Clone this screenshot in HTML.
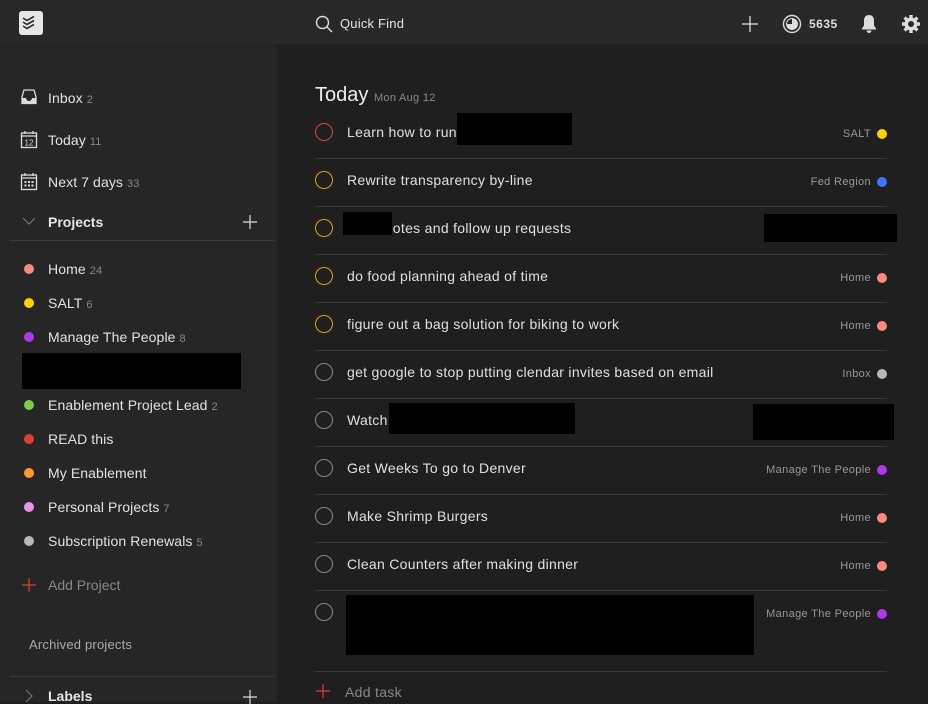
<!DOCTYPE html>
<html><head><meta charset="utf-8"><style>
*{margin:0;padding:0;box-sizing:border-box}
body{width:928px;height:702px;overflow:hidden;background:#1f1f1f;font-family:"Liberation Sans",sans-serif;color:#ddd;position:relative}
.a{position:absolute;white-space:nowrap}
#hdr{left:0;top:0;width:928px;height:45px;background:#282828;border-bottom:1px solid #222}
#side{left:0;top:45px;width:277px;height:657px;background:#262626}
.nav{font-size:14px;color:#e2e2e2;letter-spacing:.1px}
.cnt{font-size:11px;color:#888;margin-left:4px}
.dot{position:absolute;width:10px;height:10px;border-radius:50%}
.hr{position:absolute;height:1px;background:#3a3a3a}
.task{font-size:14px;color:#e0e0e0;letter-spacing:.3px}
.circ{position:absolute;width:18px;height:18px;border-radius:50%;border:1.5px solid #888}
.lab{font-size:11px;color:#999;text-align:right;letter-spacing:.35px}
.ld{position:absolute;width:10px;height:10px;border-radius:50%}
.blk{position:absolute;background:#000}
</style></head><body>
<div class="a" id="hdr"></div>
<div class="a" style="left:19px;top:11px;width:24px;height:24px;background:#e6e6e6;border-radius:3px"></div>
<svg class="a" style="left:19px;top:11px" width="24" height="24" viewBox="0 0 24 24"><g fill="none" stroke="#282828" stroke-width="1.6"><path d="M4 7l4 2.5L15 5.5"/><path d="M4 11l4 2.5L15 9.5"/><path d="M4 15l4 2.5L15 13.5"/></g></svg>
<svg class="a" style="left:315px;top:15px" width="18" height="18" viewBox="0 0 18 18"><circle cx="7.5" cy="7.5" r="6" fill="none" stroke="#ddd" stroke-width="1.4"/><path d="M12 12l5 5" stroke="#ddd" stroke-width="1.4"/></svg>
<div class="a" style="left:340px;top:16px;font-size:13px;color:#e6e6e6;letter-spacing:.2px">Quick Find</div>
<svg class="a" style="left:741px;top:15px" width="18" height="18"><path d="M9 1v16M1 9h16" stroke="#ddd" stroke-width="1.3"/></svg>
<svg class="a" style="left:782px;top:14px" width="20" height="20" viewBox="0 0 20 20"><circle cx="10" cy="10" r="8.5" fill="none" stroke="#ddd" stroke-width="1.4"/><path d="M10 4.5A5.5 5.5 0 1 1 4.5 10L10 10Z" fill="#ddd"/><circle cx="10" cy="10" r="5.5" fill="none" stroke="#ddd" stroke-width="1"/></svg>
<div class="a" style="left:809px;top:17px;font-size:12px;font-weight:bold;color:#ddd;letter-spacing:.5px">5635</div>
<svg class="a" style="left:860px;top:14px" width="18" height="20" viewBox="0 0 18 20"><path d="M9 1c-3.5 0-5 2.5-5 5.5v5L2 14.5v1h14v-1l-2-3v-5C14 3.5 12.5 1 9 1z" fill="#ddd"/><path d="M6.5 16.5a2.5 2.5 0 0 0 5 0z" fill="#ddd"/></svg>
<svg class="a" style="left:901px;top:14px" width="20" height="20" viewBox="0 0 20 20"><g fill="#ddd"><circle cx="10" cy="10" r="6.5"/><g stroke="#ddd" stroke-width="3.4"><path d="M10 1v18M1 10h18M3.6 3.6l12.8 12.8M16.4 3.6L3.6 16.4"/></g></g><circle cx="10" cy="10" r="3" fill="#282828"/></svg>

<div class="a" id="side"></div>
<svg class="a" style="left:20px;top:88px" width="18" height="18" viewBox="0 0 18 18"><path d="M2 9L4 2h10l2 7v6.5H2z" fill="none" stroke="#ddd" stroke-width="1.3"/><path d="M2 10h4a3 3 0 0 0 6 0h4v5.5H2z" fill="#ddd"/></svg>
<div class="a nav" style="left:48px;top:90px">Inbox<span class="cnt">2</span></div>
<svg class="a" style="left:20px;top:130px" width="18" height="19" viewBox="0 0 18 19"><rect x="1.5" y="3" width="15" height="14.5" fill="none" stroke="#ddd" stroke-width="1.3"/><path d="M1.5 6h15M5 1v3M13 1v3" stroke="#ddd" stroke-width="1.3"/><text x="9" y="15.5" font-size="8" fill="#ddd" text-anchor="middle" font-family="Liberation Sans">12</text></svg>
<div class="a nav" style="left:48px;top:132px">Today<span class="cnt">11</span></div>
<svg class="a" style="left:20px;top:172px" width="18" height="19" viewBox="0 0 18 19"><rect x="1.5" y="3" width="15" height="14.5" fill="none" stroke="#ddd" stroke-width="1.3"/><path d="M1.5 6h15M5 1v3M13 1v3" stroke="#ddd" stroke-width="1.3"/><g fill="#ddd"><rect x="4.5" y="9" width="2" height="2"/><rect x="8" y="9" width="2" height="2"/><rect x="11.5" y="9" width="2" height="2"/><rect x="4.5" y="12.5" width="2" height="2"/><rect x="8" y="12.5" width="2" height="2"/><rect x="11.5" y="12.5" width="2" height="2"/></g></svg>
<div class="a nav" style="left:48px;top:174px">Next 7 days<span class="cnt">33</span></div>
<svg class="a" style="left:22px;top:217px" width="14" height="9"><path d="M1 1l6 6 6-6" fill="none" stroke="#777" stroke-width="1.2"/></svg>
<div class="a" style="left:48px;top:214px;font-size:14px;font-weight:bold;color:#e6e6e6">Projects</div>
<svg class="a" style="left:243px;top:215px" width="14" height="14"><path d="M7 0v14M0 7h14" stroke="#ddd" stroke-width="1.2"/></svg>
<div class="hr" style="left:10px;top:240px;width:265px"></div>

<div class="dot" style="left:24px;top:264px;background:#f58c80"></div><div class="a nav" style="left:48px;top:261px">Home<span class="cnt">24</span></div>
<div class="dot" style="left:24px;top:298px;background:#fad000"></div><div class="a nav" style="left:48px;top:295px">SALT<span class="cnt">6</span></div>
<div class="dot" style="left:24px;top:332px;background:#af38eb"></div><div class="a nav" style="left:48px;top:329px">Manage The People<span class="cnt">8</span></div>
<div class="blk" style="left:22px;top:353px;width:219px;height:36px"></div>
<div class="dot" style="left:24px;top:400px;background:#7ecc49"></div><div class="a nav" style="left:48px;top:397px">Enablement Project Lead<span class="cnt">2</span></div>
<div class="dot" style="left:24px;top:434px;background:#db4035"></div><div class="a nav" style="left:48px;top:431px">READ this</div>
<div class="dot" style="left:24px;top:468px;background:#ff9933"></div><div class="a nav" style="left:48px;top:465px">My Enablement</div>
<div class="dot" style="left:24px;top:502px;background:#e994e9"></div><div class="a nav" style="left:48px;top:499px">Personal Projects<span class="cnt">7</span></div>
<div class="dot" style="left:24px;top:536px;background:#b8b8b8"></div><div class="a nav" style="left:48px;top:533px">Subscription Renewals<span class="cnt">5</span></div>
<svg class="a" style="left:22px;top:578px" width="14" height="14"><path d="M7 0v14M0 7h14" stroke="#db4035" stroke-width="1.2"/></svg>
<div class="a" style="left:48px;top:577px;font-size:14px;color:#888">Add Project</div>
<div class="a" style="left:29px;top:637px;font-size:13px;color:#aaa;letter-spacing:.2px">Archived projects</div>
<div class="hr" style="left:10px;top:676px;width:265px"></div>
<svg class="a" style="left:25px;top:689px" width="9" height="14"><path d="M1 1l6 6-6 6" fill="none" stroke="#777" stroke-width="1.2"/></svg>
<div class="a" style="left:48px;top:688px;font-size:14px;font-weight:bold;color:#e6e6e6">Labels</div>
<svg class="a" style="left:243px;top:690px" width="14" height="14"><path d="M7 0v14M0 7h14" stroke="#ddd" stroke-width="1.2"/></svg>

<div class="a" style="left:315px;top:84px;font-size:20px;color:#eee">Today <span style="font-size:11px;color:#888;letter-spacing:.3px">Mon Aug 12</span></div>

<div class="circ" style="left:315px;top:123px;border-color:#d1453b"></div>
<div class="a task" style="left:347px;top:124px">Learn how to run</div>
<div class="blk" style="left:457px;top:113px;width:115px;height:32px"></div>
<div class="a lab" style="right:57px;top:128px">SALT</div><div class="ld" style="left:877px;top:129px;background:#fad000"></div>
<div class="hr" style="left:315px;top:158px;width:572px"></div>

<div class="circ" style="left:315px;top:171px;border-color:#eb9a22"></div>
<div class="a task" style="left:347px;top:172px">Rewrite transparency by-line</div>
<div class="a lab" style="right:57px;top:176px">Fed Region</div><div class="ld" style="left:877px;top:177px;background:#4073ff"></div>
<div class="hr" style="left:315px;top:206px;width:572px"></div>

<div class="circ" style="left:315px;top:219px;border-color:#eb9a22"></div>
<div class="a task" style="left:347px;top:220px">&nbsp;&nbsp;&nbsp;&nbsp;&nbsp;&nbsp;&nbsp;&nbsp;&nbsp;notes and follow up requests</div>
<div class="blk" style="left:343px;top:212px;width:49px;height:23px"></div>
<div class="blk" style="left:764px;top:214px;width:133px;height:28px"></div>
<div class="hr" style="left:315px;top:254px;width:572px"></div>

<div class="circ" style="left:315px;top:267px;border-color:#eb9a22"></div>
<div class="a task" style="left:347px;top:268px">do food planning ahead of time</div>
<div class="a lab" style="right:57px;top:272px">Home</div><div class="ld" style="left:877px;top:273px;background:#f58c80"></div>
<div class="hr" style="left:315px;top:302px;width:572px"></div>

<div class="circ" style="left:315px;top:315px;border-color:#eb9a22"></div>
<div class="a task" style="left:347px;top:316px">figure out a bag solution for biking to work</div>
<div class="a lab" style="right:57px;top:320px">Home</div><div class="ld" style="left:877px;top:321px;background:#f58c80"></div>
<div class="hr" style="left:315px;top:350px;width:572px"></div>

<div class="circ" style="left:315px;top:363px"></div>
<div class="a task" style="left:347px;top:364px">get google to stop putting clendar invites based on email</div>
<div class="a lab" style="right:57px;top:368px">Inbox</div><div class="ld" style="left:877px;top:369px;background:#b8b8b8"></div>
<div class="hr" style="left:315px;top:398px;width:572px"></div>

<div class="circ" style="left:315px;top:411px"></div>
<div class="a task" style="left:347px;top:412px">Watch</div>
<div class="blk" style="left:389px;top:403px;width:186px;height:31px"></div>
<div class="blk" style="left:753px;top:404px;width:141px;height:36px"></div>
<div class="hr" style="left:315px;top:446px;width:572px"></div>

<div class="circ" style="left:315px;top:459px"></div>
<div class="a task" style="left:347px;top:460px">Get Weeks To go to Denver</div>
<div class="a lab" style="right:57px;top:464px">Manage The People</div><div class="ld" style="left:877px;top:465px;background:#af38eb"></div>
<div class="hr" style="left:315px;top:494px;width:572px"></div>

<div class="circ" style="left:315px;top:507px"></div>
<div class="a task" style="left:347px;top:508px">Make Shrimp Burgers</div>
<div class="a lab" style="right:57px;top:512px">Home</div><div class="ld" style="left:877px;top:513px;background:#f58c80"></div>
<div class="hr" style="left:315px;top:542px;width:572px"></div>

<div class="circ" style="left:315px;top:555px"></div>
<div class="a task" style="left:347px;top:556px">Clean Counters after making dinner</div>
<div class="a lab" style="right:57px;top:560px">Home</div><div class="ld" style="left:877px;top:561px;background:#f58c80"></div>
<div class="hr" style="left:315px;top:590px;width:572px"></div>

<div class="circ" style="left:315px;top:603px"></div>
<div class="blk" style="left:346px;top:595px;width:408px;height:60px"></div>
<div class="a lab" style="right:57px;top:608px">Manage The People</div><div class="ld" style="left:877px;top:609px;background:#af38eb"></div>
<div class="hr" style="left:315px;top:671px;width:572px"></div>

<svg class="a" style="left:316px;top:684px" width="14" height="14"><path d="M7 0v14M0 7h14" stroke="#db4035" stroke-width="1.2"/></svg>
<div class="a" style="left:345px;top:684px;font-size:14px;color:#888;letter-spacing:.3px">Add task</div>
</body></html>
